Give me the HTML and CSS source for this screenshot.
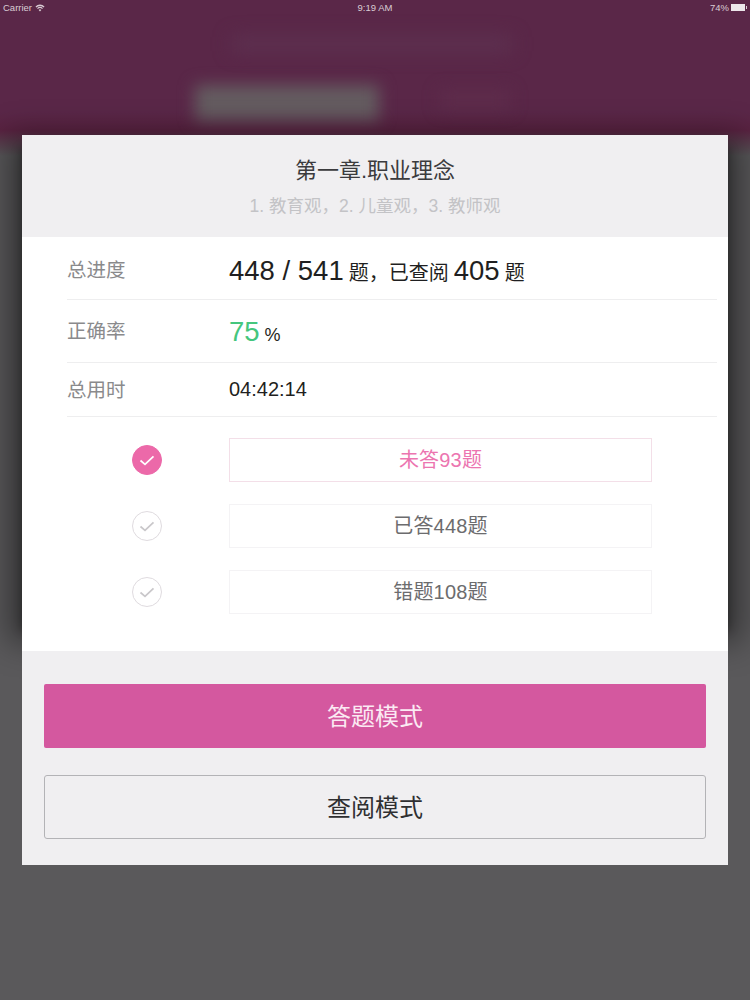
FILE: index.html
```html
<!DOCTYPE html>
<html lang="zh">
<head>
<meta charset="utf-8">
<title>第一章.职业理念</title>
<link rel="stylesheet" href="styles.css">
</head>
<body>
<div class="screen">
  <div class="top-band"><div class="blur-a"></div><div class="blur-b"></div><div class="blur-c"></div></div>
  <div class="status">
    <div class="status-left">Carrier
      <svg class="wifi" viewBox="0 0 12 9" width="10" height="8"><path d="M6 8.6 4.4 6.8a2.3 2.3 0 0 1 3.2 0zM3.5 5.8 2.5 4.7a5 5 0 0 1 7 0l-1 1.1a3.6 3.6 0 0 0-5 0zM1.6 3.8.6 2.7a7.6 7.6 0 0 1 10.8 0l-1 1.1a6.2 6.2 0 0 0-8.8 0z" fill="currentColor"/></svg>
    </div>
    <div class="status-time">9:19 AM</div>
    <div class="status-right">74%
      <span class="battery"></span><span class="battery-tip"></span>
    </div>
  </div>
  <main class="modal">
    <header class="modal-head">
      <h1 class="title">第一章.职业理念</h1>
      <p class="subtitle">1. 教育观，2. 儿童观，3. 教师观</p>
    </header>
    <section class="modal-body">
      <div class="stat stat-1">
        <span class="stat-label">总进度</span>
        <span class="stat-value"><span class="big">448 / 541</span> <span class="small">题，已查阅</span> <span class="big">405</span> <span class="small">题</span></span>
      </div>
      <div class="stat stat-2">
        <span class="stat-label">正确率</span>
        <span class="stat-value"><span class="big green">75</span> <span class="small pct">%</span></span>
      </div>
      <div class="stat stat-3">
        <span class="stat-label">总用时</span>
        <span class="stat-value time">04:42:14</span>
      </div>
      <div class="options">
        <div class="option">
          <span class="check check-on"><svg viewBox="0 0 30 30" width="30" height="30"><path d="M8.5 15.5l4.5 3.8 8.5-8" fill="none" stroke="#fff" stroke-width="1.7"/></svg></span>
          <span class="option-box option-on">未答93题</span>
        </div>
        <div class="option">
          <span class="check"><svg viewBox="0 0 30 30" width="30" height="30"><path d="M8.5 15.5l4.5 3.8 8.5-8" fill="none" stroke="#c9c7ca" stroke-width="1.7"/></svg></span>
          <span class="option-box">已答448题</span>
        </div>
        <div class="option">
          <span class="check"><svg viewBox="0 0 30 30" width="30" height="30"><path d="M8.5 15.5l4.5 3.8 8.5-8" fill="none" stroke="#c9c7ca" stroke-width="1.7"/></svg></span>
          <span class="option-box">错题108题</span>
        </div>
      </div>
    </section>
    <footer class="modal-foot">
      <button class="btn btn-primary">答题模式</button>
      <button class="btn btn-outline">查阅模式</button>
    </footer>
  </main>
</div>
</body>
</html>
```

FILE: styles.css
```css
* { box-sizing: border-box; }
html, body { margin: 0; padding: 0; }
body {
  font-family: "Liberation Sans", "Noto Sans CJK SC", sans-serif;
  background: #5a595b;
}
.screen {
  position: relative;
  width: 750px;
  height: 1000px;
  overflow: hidden;
  background: #5a595b;
}
.top-band {
  position: absolute;
  left: 0; top: 0; right: 0;
  height: 156px;
  background: linear-gradient(#5a2748 0, #5a2748 112px, #5a2342 130px, rgba(90, 35, 66, 0) 156px);
}
.blur-a {
  position: absolute;
  left: 195px; top: 85px;
  width: 184px; height: 36px;
  background: #645c60;
  filter: blur(8px);
}
.blur-b {
  position: absolute;
  left: 232px; top: 36px;
  width: 280px; height: 16px;
  background: #5d3150;
  filter: blur(9px);
}
.blur-c {
  position: absolute;
  left: 440px; top: 90px;
  width: 70px; height: 20px;
  background: #5e2c4b;
  filter: blur(8px);
}
.status {
  position: relative;
  height: 15px;
  display: flex;
  justify-content: space-between;
  align-items: center;
  padding: 0 3px;
  font-size: 9.5px;
  color: #d9ccd4;
}
.status-left, .status-right {
  width: 120px;
  display: flex;
  align-items: center;
  gap: 3px;
}
.status-right { justify-content: flex-end; gap: 2px; }
.battery {
  width: 14px; height: 7px;
  display: block;
  background: #ece6ea;
}
.battery-tip { width: 1px; height: 3px; margin-left: -1px; background: #d9ccd4; }
.modal {
  position: relative;
  width: 706px;
  height: 730px;
  margin: 120px 0 0 22px;
  display: flex;
  flex-direction: column;
}
.modal::before {
  content: "";
  position: absolute;
  left: 0; right: 0; top: 14px; height: 480px;
  box-shadow: 0 0 30px 14px rgba(0, 0, 0, .42), 0 0 8px 2px rgba(0, 0, 0, .25);
}
.modal-head {
  position: relative;
  height: 102px;
  background: #f0eff1;
  text-align: center;
  padding-top: 21px;
}
.title {
  margin: 0;
  font-size: 22px;
  line-height: 30px;
  font-weight: 400;
  color: #3b3b3d;
}
.subtitle {
  margin: 8px 0 0;
  font-size: 17.5px;
  line-height: 24px;
  color: #c3c3c6;
}
.modal-body {
  position: relative;
  height: 414px;
  background: #fff;
  padding-left: 45px;
  padding-right: 11px;
}
.stat {
  display: flex;
  align-items: center;
  border-bottom: 1px solid #eeeeef;
}
.stat-1 { height: 63px; padding-top: 1px; }
.stat-1 .stat-value { padding-top: 4px; }
.stat-2 { height: 63px; padding-bottom: 4px; }
.stat-2 .stat-value { padding-top: 6px; }
.stat-3 { height: 54px; padding-bottom: 2px; }
.stat-3 .stat-value { padding-top: 2px; }
.stat-label {
  width: 162px;
  font-size: 19.5px;
  color: #8a8a8c;
}
.stat-value { color: #1f1f21; font-size: 18px; white-space: nowrap; }
.big { font-size: 27.5px; }
.small { font-size: 20px; }
.pct { font-size: 18px; }
.green { color: #45c67d; }
.stat-value.time { font-size: 20px; }
.options {
  padding-top: 21px;
  display: flex;
  flex-direction: column;
  gap: 22px;
}
.option {
  display: flex;
  align-items: center;
  height: 44px;
}
.check {
  width: 30px; height: 30px;
  margin-left: 65px;
  margin-right: 67px;
  border-radius: 50%;
  border: 1.5px solid #dfdbdf;
  position: relative;
  display: block;
}
.check svg { position: absolute; left: -1.5px; top: -1.5px; }
.check-on { background: #ec69a9; border-color: #ec69a9; }
.option-box {
  width: 423px;
  height: 44px;
  border: 1px solid #f4f3f5;
  display: flex;
  align-items: center;
  justify-content: center;
  padding-bottom: 3px;
  font-size: 20px;
  letter-spacing: .2px;
  color: #6c6c6e;
}
.option-on { border-color: #f3dfe8; color: #ec75b0; }
.modal-foot {
  position: relative;
  flex: 1;
  background: #f0eff1;
  padding: 33px 22px 0;
  display: flex;
  flex-direction: column;
  gap: 27px;
}
.btn {
  display: block;
  width: 662px;
  height: 64px;
  border-radius: 2px;
  font-family: inherit;
  font-size: 24px;
  padding: 0 0 4px;
}
.btn-primary { background: #d4589f; color: #fbeaf3; border: 0; }
.btn-outline { background: transparent; color: #2f2f31; border: 1px solid #b3b3b6; border-radius: 3px; }
```
